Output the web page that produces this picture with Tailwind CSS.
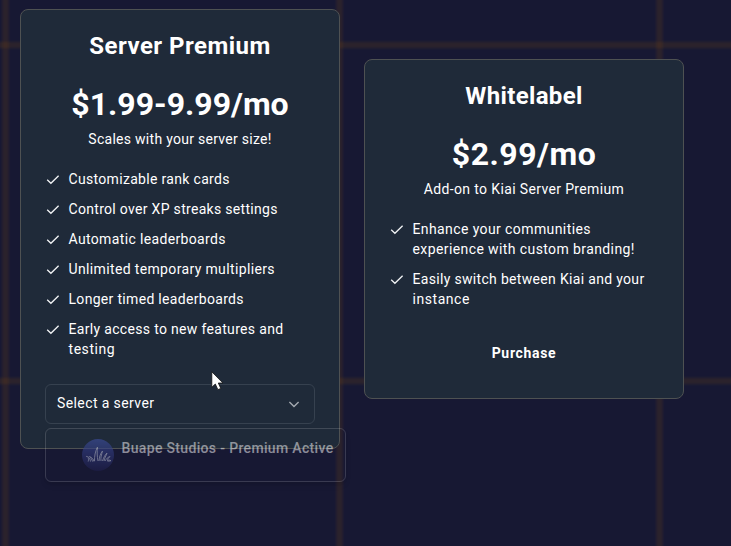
<!DOCTYPE html>
<html lang="en">
<head>
<meta charset="utf-8">
<title>Premium</title>
<script src="https://cdn.jsdelivr.net/npm/@tailwindcss/browser@4"></script>
</head>
<body class="relative h-[546px] w-[731px] overflow-hidden bg-[#171833] font-['Roboto',sans-serif] text-sm text-white">
<svg class="absolute inset-0 -z-0" width="731" height="546" fill="none" stroke="#a65a18" stroke-opacity=".14" stroke-width="6.5">
  <defs><filter id="soft" filterUnits="userSpaceOnUse" x="-10" y="-10" width="751" height="566"><feGaussianBlur stdDeviation="1.1"/></filter></defs>
  <g filter="url(#soft)">
    <path d="M5.5-10V556"/><path d="M339.5-10V556"/><path d="M659.5-10V556"/>
    <path d="M-10 45H741"/><path d="M-10 381H741"/>
  </g>
</svg>
<svg class="hidden">
  <symbol id="check" viewBox="0 0 16 16"><path d="M2.200 8.800 5.900 12.300 13.600 4.700" fill="none" stroke="#f1f3f5" stroke-width="1.3"/></symbol>
</svg>
<main class="relative flex items-start gap-6 pl-5 pt-[9px]">
  <section class="relative h-[440px] w-80 rounded-lg border border-[#4e5152] bg-[#1f2a39] px-6 pt-6">
    <h2 class="text-center text-2xl leading-6 font-bold tracking-[0.475px]">Server Premium</h2>
    <p class="mt-7 text-center text-[32px] leading-9 font-bold">$1.99-9.99/mo</p>
    <p class="mt-[7px] text-center tracking-[0.276px]">Scales with your server size!</p>
    <ul class="mt-5 flex flex-col gap-2.5">
      <li class="flex gap-[7.5px]"><svg class="mt-0.5 size-4 shrink-0"><use href="#check"/></svg><span class="tracking-[0.32px]">Customizable rank cards</span></li>
      <li class="flex gap-[7.5px]"><svg class="mt-0.5 size-4 shrink-0"><use href="#check"/></svg><span class="tracking-[0.308px]">Control over XP streaks settings</span></li>
      <li class="flex gap-[7.5px]"><svg class="mt-0.5 size-4 shrink-0"><use href="#check"/></svg><span class="tracking-[0.353px]">Automatic leaderboards</span></li>
      <li class="flex gap-[7.5px]"><svg class="mt-0.5 size-4 shrink-0"><use href="#check"/></svg><span class="tracking-[0.357px]">Unlimited temporary multipliers</span></li>
      <li class="flex gap-[7.5px]"><svg class="mt-0.5 size-4 shrink-0"><use href="#check"/></svg><span class="tracking-[0.312px]">Longer timed leaderboards</span></li>
      <li class="flex gap-[7.5px]"><svg class="mt-0.5 size-4 shrink-0"><use href="#check"/></svg><span class="tracking-[0.325px] whitespace-nowrap">Early access to new features and<br><span class="tracking-[0.55px]">testing</span></span></li>
    </ul>
    <button class="mt-[25px] flex h-10 w-full items-center justify-between rounded-md border border-[#36414f] px-3 pl-[11px] pb-0.5">
      <span class="tracking-[0.399px]">Select a server</span>
      <svg class="mt-0.5 size-4" viewBox="0 0 16 16" fill="none" stroke="#a3a9b0" stroke-width="1.4"><path d="m3.400 6 4.600 4.500L12.600 6"/></svg>
    </button>
    <div class="absolute left-6 top-[418px] flex h-[54px] w-[301px] rounded-md border border-white/15 shadow-md">
      <svg class="ml-9 mt-2.5 size-8 shrink-0 opacity-60" viewBox="0 0 32 32">
        <defs><linearGradient id="sky" x1="0" y1="0" x2="0" y2="1"><stop stop-color="#3f50a4"/><stop offset="1" stop-color="#1f1f4c"/></linearGradient></defs>
        <circle cx="16" cy="16" r="16" fill="url(#sky)"/>
        <path d="M4 17.500c2-.5 4 1.500 4.500 5m-2.500-4c.7 1.500.6 2.500.2 4m4.300 0c-.5-2-1.500-3.500-3-5 2.500 1 4 2.700 4.500 5m.5-.5c0-5 .5-9 3-14-.5 5-.5 9 .5 14m1 0c.5-4 1-7 3.500-10-1 4-2 6.500-1.500 10m1.500 0c1-3 2-5.500 4.500-8-1 3-2.500 5-3 8m1 0c1.500-2.500 2.800-3.700 5-4.500-1.500 1.500-2.500 2.500-2.500 4.200 1-.8 2.200-.8 3.500 0-1.500.5-2.500.5-3.500.3" fill="none" stroke="#b9bdd6" stroke-width=".9"/>
      </svg>
      <span class="ml-[7.500px] mt-[9px] font-medium tracking-[0.335px] whitespace-nowrap text-white/50">Buape Studios - Premium Active</span>
    </div>
  </section>
  <section class="mt-[50px] h-[340px] w-80 rounded-lg border border-[#4e5152] bg-[#1f2a39] px-6 pt-6">
    <h2 class="text-center text-2xl leading-6 font-bold tracking-[0.346px]">Whitelabel</h2>
    <p class="mt-7 text-center text-[32px] leading-9 font-bold tracking-[0.5px]">$2.99/mo</p>
    <p class="mt-[7px] text-center tracking-[0.356px]">Add-on to Kiai Server Premium</p>
    <ul class="mt-5 flex flex-col gap-2.5">
      <li class="flex gap-[7.5px]"><svg class="mt-0.5 size-4 shrink-0"><use href="#check"/></svg><span class="tracking-[0.401px] whitespace-nowrap">Enhance your communities<br>experience with custom branding!</span></li>
      <li class="flex gap-[7.5px]"><svg class="mt-0.5 size-4 shrink-0"><use href="#check"/></svg><span class="tracking-[0.320px] whitespace-nowrap">Easily switch between Kiai and your<br><span class="tracking-[0.55px]">instance</span></span></li>
    </ul>
    <button class="mt-6 flex h-10 w-full items-center justify-center font-bold tracking-[0.68px]">Purchase</button>
  </section>
</main>
<svg class="absolute left-[211px] top-[371px]" width="13" height="20" viewBox="0 0 13 20"><path d="M.8.8v15.500l3.500-3.300 2.600 5.700 2.900-1.300-2.500-5.400h4.600z" fill="#fff" stroke="#111" stroke-width=".8"/></svg>
</body>
</html>
